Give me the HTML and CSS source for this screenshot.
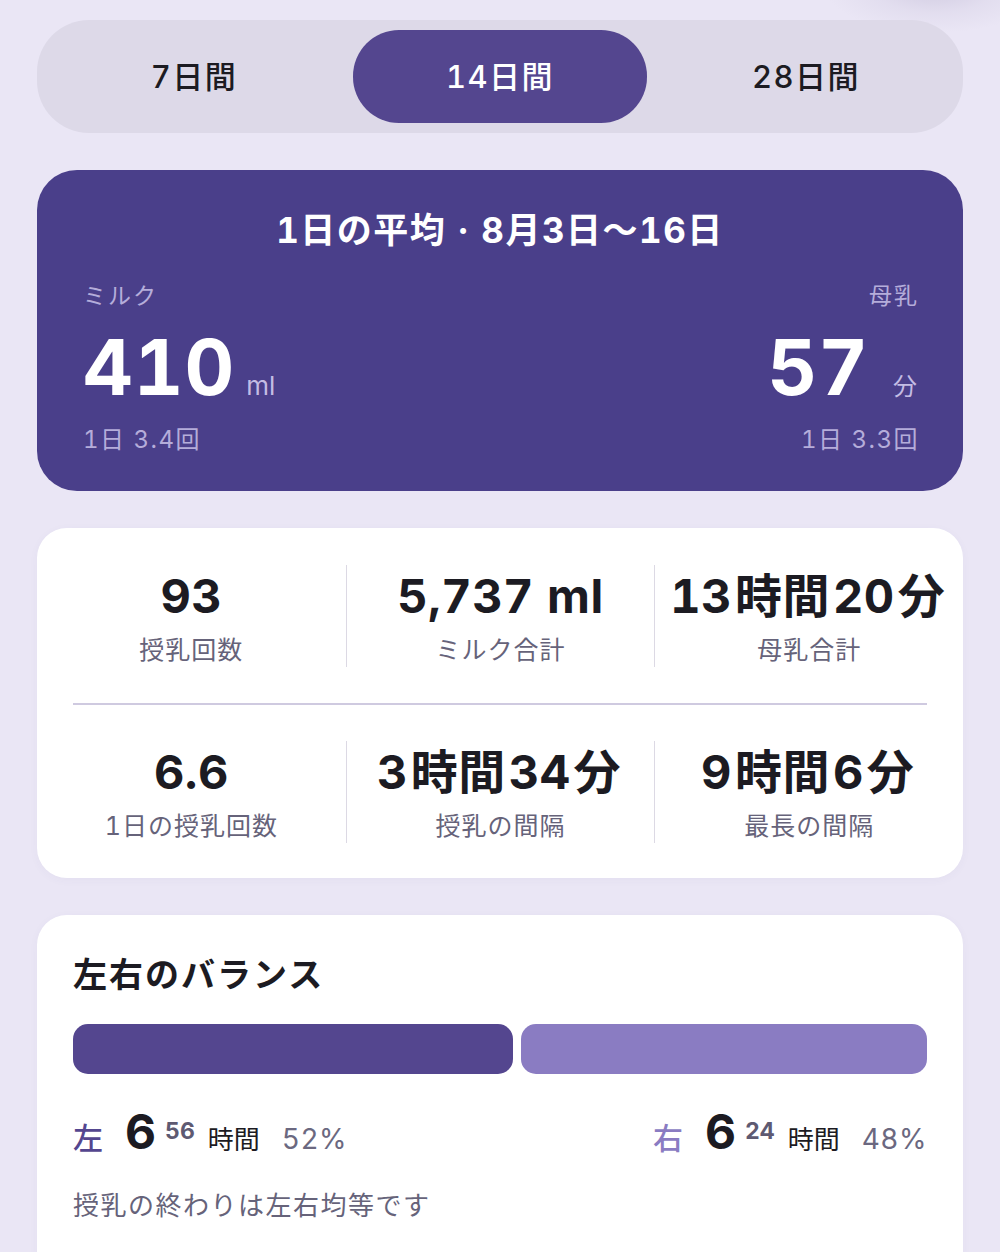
FILE: index.html
```html
<!DOCTYPE html>
<html lang="ja">
<head>
<meta charset="utf-8">
<title>授乳の統計</title>
<link rel="stylesheet" href="styles.css">
</head>
<body>
<main class="page">
  <nav class="segment">
    <div class="seg-item">7日間</div>
    <div class="seg-item active">14日間</div>
    <div class="seg-item">28日間</div>
  </nav>

  <section class="hero">
    <h1 class="hero-title">1日の平均 · 8月3日〜16日</h1>
    <div class="hero-cols">
      <div class="hero-col">
        <div class="hero-label">ミルク</div>
        <div class="hero-value"><span class="big">410</span><span class="unit">ml</span></div>
        <div class="hero-sub">1日 3.4回</div>
      </div>
      <div class="hero-col right">
        <div class="hero-label">母乳</div>
        <div class="hero-value"><span class="big">57</span><span class="unit wide">分</span></div>
        <div class="hero-sub">1日 3.3回</div>
      </div>
    </div>
  </section>

  <section class="stats">
    <div class="stats-row">
      <div class="cell"><div class="val">93</div><div class="lbl">授乳回数</div></div>
      <div class="cell"><div class="val">5,737 ml</div><div class="lbl">ミルク合計</div></div>
      <div class="cell"><div class="val">13<span class="jp">時間</span>20<span class="jp">分</span></div><div class="lbl">母乳合計</div></div>
    </div>
    <div class="stats-hr"></div>
    <div class="stats-row">
      <div class="cell"><div class="val">6.6</div><div class="lbl">1日の授乳回数</div></div>
      <div class="cell"><div class="val">3<span class="jp">時間</span>34<span class="jp">分</span></div><div class="lbl">授乳の間隔</div></div>
      <div class="cell"><div class="val">9<span class="jp">時間</span>6<span class="jp">分</span></div><div class="lbl">最長の間隔</div></div>
    </div>
  </section>

  <section class="balance">
    <h2 class="balance-title">左右のバランス</h2>
    <div class="bars">
      <div class="bar left" style="flex: 52 1 0"></div>
      <div class="bar right" style="flex: 48 1 0"></div>
    </div>
    <div class="sides">
      <div class="side">
        <span class="side-name l">左</span><span class="side-h">6</span><span class="side-m">56</span><span class="side-unit">時間</span><span class="side-pct">52%</span>
      </div>
      <div class="side">
        <span class="side-name r">右</span><span class="side-h">6</span><span class="side-m">24</span><span class="side-unit">時間</span><span class="side-pct">48%</span>
      </div>
    </div>
    <p class="note">授乳の終わりは左右均等です</p>
  </section>
</main>
</body>
</html>
```

FILE: styles.css
```css
* { box-sizing: border-box; }

html, body {
  margin: 0;
  padding: 0;
}

body {
  background:
    radial-gradient(ellipse 110px 45px at 935px -12px, rgba(170,162,195,0.38) 0%, rgba(170,162,195,0.12) 55%, rgba(234,230,245,0) 100%),
    #EAE6F5;
  font-family: "Inter", "Noto Sans CJK JP", "Noto Sans", sans-serif;
  font-feature-settings: "tnum" 1;
  color: #1C1B22;
  height: 1252px;
  overflow: hidden;
}

.page {
  padding: 20px 37px 0;
  display: flex;
  flex-direction: column;
  gap: 37px;
}

/* segment control */
.segment {
  background: #DDD9E8;
  border-radius: 52px;
  height: 113px;
  padding: 10px;
  display: grid;
  grid-template-columns: 1fr 1fr 1fr;
  column-gap: 12px;
}

.seg-item {
  display: flex;
  align-items: center;
  justify-content: center;
  font-size: 31px;
  font-weight: 500;
  letter-spacing: 1.5px;
  color: #1C1B22;
  border-radius: 46px;
  padding-bottom: 4px;
}

.seg-item.active {
  background: #54468F;
  color: #FFFFFF;
}

/* hero card */
.hero {
  background: #4A3F8A;
  border-radius: 40px;
  padding: 38px 46px 35px;
  color: #FFFFFF;
}

.hero-title {
  margin: 0;
  text-align: center;
  font-size: 35px;
  line-height: 44px;
  font-weight: 700;
  letter-spacing: 1.5px;
}

.hero-cols {
  display: flex;
  justify-content: space-between;
  margin-top: 28px;
}

.hero-col.right {
  text-align: right;
}

.hero-label {
  font-size: 23px;
  line-height: 32px;
  letter-spacing: 2px;
  color: #B5ADDA;
}

.hero-col.right .hero-label,
.hero-col.right .hero-sub {
  margin-right: -2px;
}

.hero-value {
  margin-top: 17px;
  height: 76px;
  line-height: 76px;
  white-space: nowrap;
}

.big {
  font-size: 77px;
  font-weight: 700;
  letter-spacing: 1px;
}

.unit {
  font-size: 26px;
  color: #C3BCE4;
  margin-left: 11px;
}

.unit.wide {
  font-size: 24px;
  margin-left: 24px;
}

.hero-sub {
  margin-top: 19px;
  font-size: 24px;
  line-height: 32px;
  letter-spacing: 1.5px;
  color: #B5ADDA;
}

/* stats card */
.stats {
  background: #FFFFFF;
  border-radius: 30px;
  padding: 37px 0 35px;
  box-shadow: 0 2px 10px rgba(80, 70, 130, 0.04);
}

.stats-row {
  display: grid;
  grid-template-columns: 1fr 1fr 1fr;
}

.cell {
  text-align: center;
  white-space: nowrap;
}

.cell + .cell {
  border-left: 1.5px solid #DCD9E4;
}

.val {
  font-size: 47px;
  line-height: 62px;
  font-weight: 700;
  color: #1C1B22;
  letter-spacing: 0.5px;
}

.val .jp {
  margin: 0 3px;
}

.lbl {
  margin-top: 6px;
  font-size: 25px;
  line-height: 34px;
  letter-spacing: 1px;
  color: #66637A;
}

.stats-hr {
  height: 1.5px;
  background: #CFCAE0;
  margin: 36px 36px 36px;
}

/* balance card */
.balance {
  background: #FFFFFF;
  border-radius: 30px;
  padding: 38px 36px 60px;
  box-shadow: 0 2px 10px rgba(80, 70, 130, 0.04);
}

.balance-title {
  margin: 0;
  font-size: 34px;
  line-height: 44px;
  font-weight: 700;
  letter-spacing: 2px;
  color: #1C1B22;
}

.bars {
  display: flex;
  gap: 8px;
  margin-top: 27px;
}

.bar {
  height: 50px;
  border-radius: 15px;
}

.bar.left { background: #54468F; }
.bar.right { background: #8A7CC2; }

.sides {
  display: flex;
  justify-content: space-between;
  margin-top: 33px;
  height: 50px;
}

.side {
  display: flex;
  align-items: baseline;
  white-space: nowrap;
  line-height: 50px;
}

.side-name {
  font-size: 30px;
  font-weight: 500;
}

.side-name.l { color: #54468F; }
.side-name.r { color: #8A7CC2; }

.side-h {
  margin-left: 22px;
  font-size: 48px;
  font-weight: 700;
  color: #1C1B22;
}

.side-m {
  margin-left: 9px;
  font-size: 23px;
  font-weight: 700;
  color: #5E5A72;
  position: relative;
  top: -10px;
}

.side-unit {
  margin-left: 13px;
  font-size: 26px;
  color: #1C1B22;
}

.side-pct {
  margin-left: 22px;
  font-size: 28px;
  letter-spacing: 0.5px;
  color: #6B6880;
}

.note {
  margin: 31px 0 0;
  font-size: 26px;
  line-height: 36px;
  letter-spacing: 1.5px;
  color: #66637A;
}
```
